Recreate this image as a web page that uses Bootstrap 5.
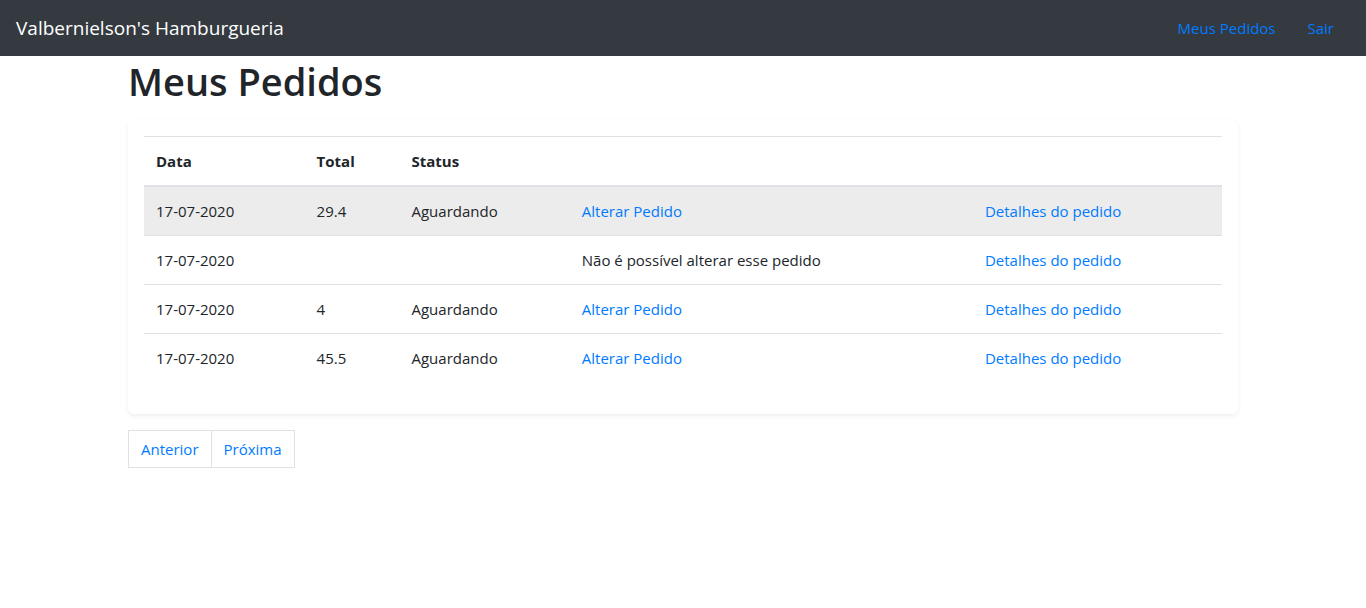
<!DOCTYPE html>
<html lang="pt-BR">
<head>
<meta charset="utf-8">
<meta name="viewport" content="width=device-width, initial-scale=1">
<title>Meus Pedidos</title>
<link rel="stylesheet" href="https://cdn.jsdelivr.net/npm/bootstrap@5.3.0/dist/css/bootstrap.min.css">
<style>
body { font-family: "Open Sans", "Noto Sans", sans-serif; font-size: 15px; line-height: 24px; color: #212529; }
a { color: #007bff; text-decoration: none; }
a:hover { text-decoration: underline; }
.topbar { background: #343a40; min-height: 56px; }
.topbar .navbar-brand { font-size: 19px; line-height: 32px; }
.page { max-width: 1142px; }
h1 { font-size: 38px; line-height: 50px; font-weight: 600; margin-bottom: 14px; }
.orders { --bs-table-bg: transparent; border-color: #dee2e6; }
.orders th, .orders td { padding: 12px; border-width: 1px 0 0; }
.orders thead th { border-bottom: 2px solid #dee2e6; }
.orders tr.current td { background: #ececec; }
.pager .page-item .page-link { color: #007bff; border-color: #dee2e6; border-radius: 0; padding: 6px 12px; font-size: 15px; }
</style>
</head>
<body>
<nav class="navbar topbar px-3 py-2">
  <a class="navbar-brand text-white py-1" href="#">Valbernielson's Hamburgueria</a>
  <div class="d-flex">
    <a class="px-3" href="#">Meus Pedidos</a>
    <a class="px-3" href="#">Sair</a>
  </div>
</nav>
<main class="container-fluid page px-3">
  <h1>Meus Pedidos</h1>
  <section class="p-3 mb-3 bg-white rounded shadow-sm">
    <table class="table orders mb-3">
      <colgroup><col style="width:14.9%"><col style="width:8.8%"><col style="width:15.8%"><col style="width:37.4%"><col></colgroup>
      <thead><tr><th scope="col">Data</th><th scope="col">Total</th><th scope="col">Status</th><th></th><th></th></tr></thead>
      <tbody>
        <tr class="current"><td>17-07-2020</td><td>29.4</td><td>Aguardando</td><td><a href="#">Alterar Pedido</a></td><td><a href="#">Detalhes do pedido</a></td></tr>
        <tr><td>17-07-2020</td><td></td><td></td><td>Não é possível alterar esse pedido</td><td><a href="#">Detalhes do pedido</a></td></tr>
        <tr><td>17-07-2020</td><td>4</td><td>Aguardando</td><td><a href="#">Alterar Pedido</a></td><td><a href="#">Detalhes do pedido</a></td></tr>
        <tr><td>17-07-2020</td><td>45.5</td><td>Aguardando</td><td><a href="#">Alterar Pedido</a></td><td><a href="#">Detalhes do pedido</a></td></tr>
      </tbody>
    </table>
  </section>
  <nav aria-label="Paginação">
    <ul class="pagination pager">
      <li class="page-item"><a class="page-link" href="#">Anterior</a></li>
      <li class="page-item"><a class="page-link" href="#">Próxima</a></li>
    </ul>
  </nav>
</main>
<script src="https://cdn.jsdelivr.net/npm/bootstrap@5.3.0/dist/js/bootstrap.bundle.min.js"></script>
</body>
</html>
